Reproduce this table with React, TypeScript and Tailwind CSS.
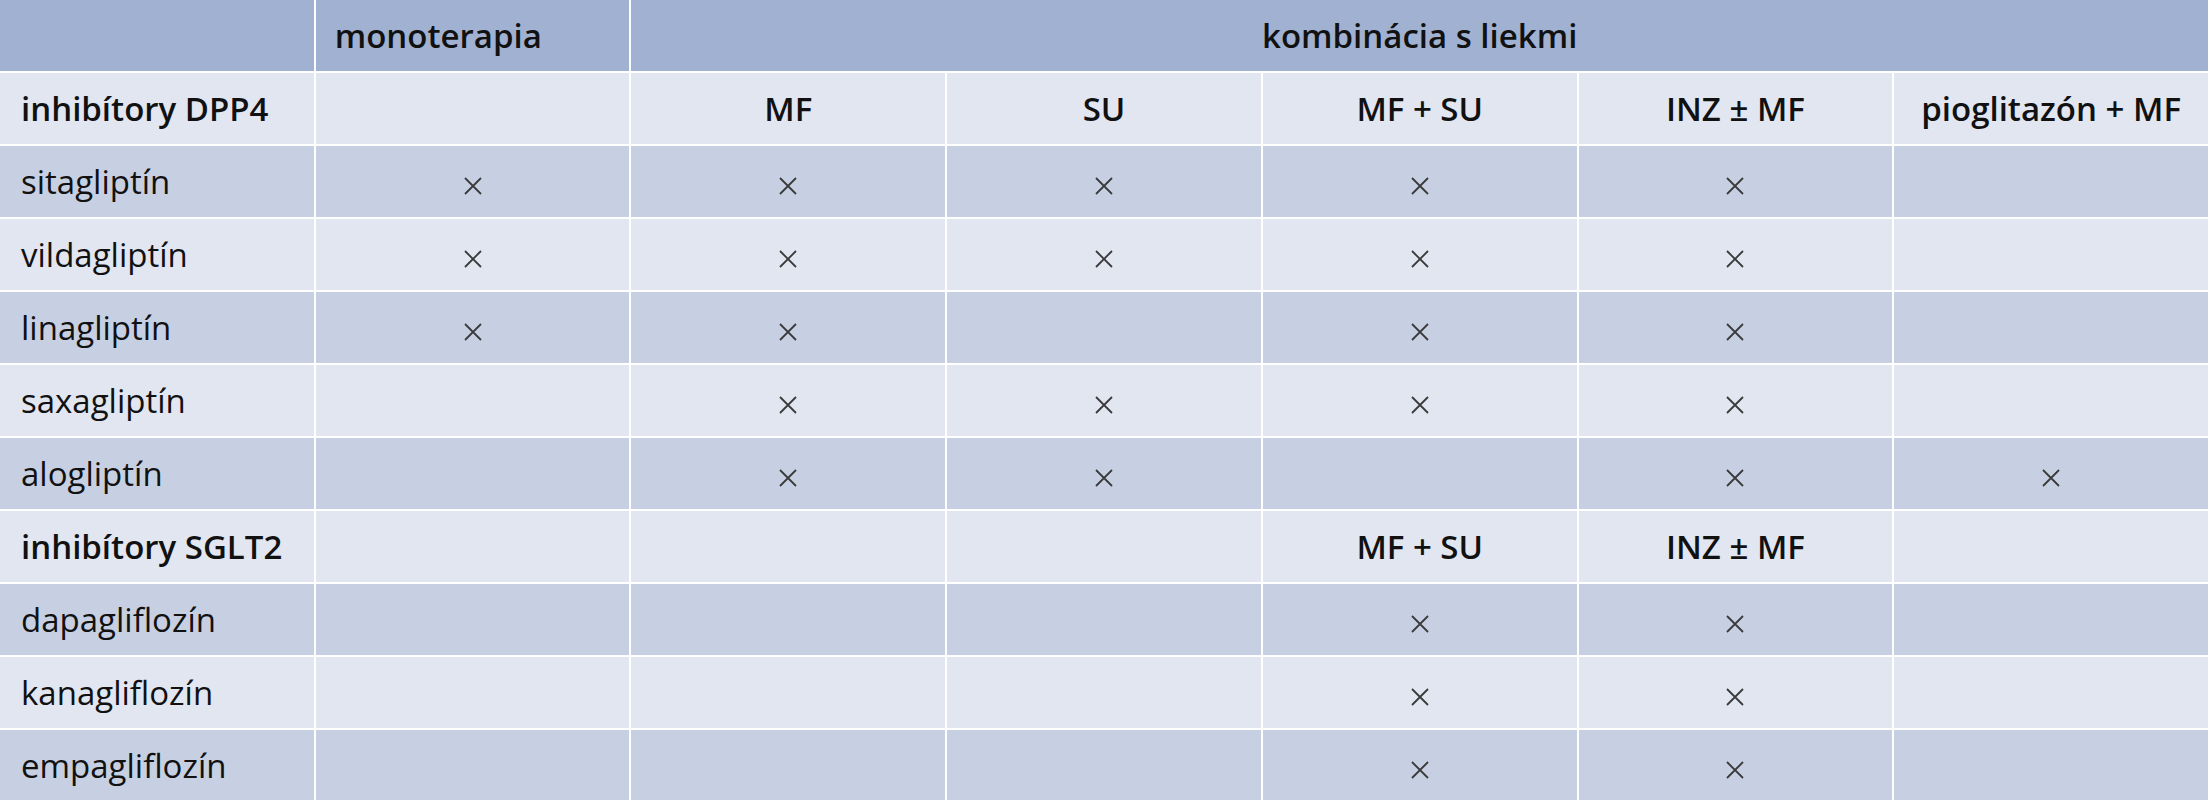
import React from "react";

type Row = { label: string; bold?: boolean; cells: string[] };

const rows: Row[] = [
  { label: "inhibítory DPP4", bold: true, cells: ["", "MF", "SU", "MF + SU", "INZ ± MF", "pioglitazón + MF"] },
  { label: "sitagliptín", cells: ["x", "x", "x", "x", "x", ""] },
  { label: "vildagliptín", cells: ["x", "x", "x", "x", "x", ""] },
  { label: "linagliptín", cells: ["x", "x", "", "x", "x", ""] },
  { label: "saxagliptín", cells: ["", "x", "x", "x", "x", ""] },
  { label: "alogliptín", cells: ["", "x", "x", "", "x", "x"] },
  { label: "inhibítory SGLT2", bold: true, cells: ["", "", "", "MF + SU", "INZ ± MF", ""] },
  { label: "dapagliflozín", cells: ["", "", "", "x", "x", ""] },
  { label: "kanagliflozín", cells: ["", "", "", "x", "x", ""] },
  { label: "empagliflozín", cells: ["", "", "", "x", "x", ""] },
];

function Cross() {
  return (
    <svg width="18" height="18" viewBox="0 0 18 18" className="mt-[8px]" aria-label="×">
      <path d="M1 1 L17 17 M17 1 L1 17" stroke="#3a3a3a" strokeWidth="1.8" fill="none" />
    </svg>
  );
}

export default function App() {
  return (
    <div className="w-[2208px] h-[800px] overflow-hidden bg-white font-['Open_Sans',sans-serif] text-[33px] text-[#111]">
      <div className="grid grid-cols-7 gap-[2px] auto-rows-[71px]">
        <div className="bg-[#a1b1d1]" />
        <div className="bg-[#a1b1d1] flex items-center pl-[19px] font-semibold">monoterapia</div>
        <div className="col-span-5 bg-[#a1b1d1] flex items-center justify-center font-semibold">
          kombinácia s liekmi
        </div>
        {rows.map((r, i) => {
          const bg = i % 2 === 0 ? "bg-[#e1e6f1]" : "bg-[#c7d0e3]";
          return (
            <React.Fragment key={r.label}>
              <div className={`${bg} flex items-center pl-[21px] ${r.bold ? "font-semibold" : ""}`}>{r.label}</div>
              {r.cells.map((c, j) => (
                <div
                  key={j}
                  className={`${bg} flex items-center justify-center ${r.bold ? "font-semibold" : ""}`}
                >
                  {c === "x" ? <Cross /> : c}
                </div>
              ))}
            </React.Fragment>
          );
        })}
      </div>
    </div>
  );
}
